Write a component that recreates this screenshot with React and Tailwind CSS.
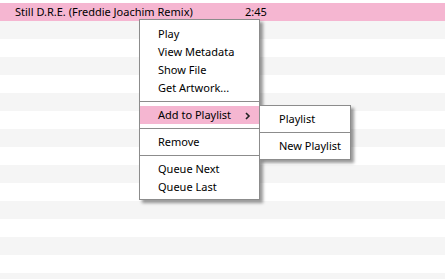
import React from "react";

const rows = 16;

function MenuItem({ children, active, arrow, pl = "pl-[18px]" }) {
  return (
    <div
      className={`h-[18px] flex items-center whitespace-nowrap ${pl} pr-2 relative ${active ? "bg-[#f5b6d1]" : ""}`}
    >
      <span className="pt-px">{children}</span>
      {arrow && (
        <svg className="absolute right-[8px] top-[6px]" width="6" height="8" viewBox="0 0 6 8">
          <path d="M1 1 L4 4 L1 7" stroke="#222" strokeWidth="1.6" fill="none" />
        </svg>
      )}
    </div>
  );
}

function Sep() {
  return (
    <div className="h-[9px] flex flex-col">
      <div className="h-[4px]" />
      <div className="h-px bg-[#8c8c8c]" />
    </div>
  );
}

export default function App() {
  const list = [];
  for (let i = 0; i < rows; i++) {
    const bg = i === 0 ? "bg-[#f5b6d1]" : i % 2 === 1 ? "bg-[#f5f5f5]" : "bg-white";
    list.push(
      <div key={i} className={`h-[18px] flex items-center whitespace-nowrap ${bg}`}>
        {i === 0 && (
          <>
            <span className="pl-[15px] w-[245px]">Still D.R.E. (Freddie Joachim Remix)</span>
            <span>2:45</span>
          </>
        )}
      </div>
    );
  }
  return (
    <div
      className="relative w-[445px] h-[279px] overflow-hidden bg-white text-[11px] text-black"
      style={{ fontFamily: '"Noto Sans", sans-serif' }}
    >
      <div className="h-[3px] bg-white" />
      {list}

      <div className="absolute left-[139px] top-[19px] w-[121px] border border-[#8c8c8c] bg-white pt-[5px] pb-[3px] shadow-[3px_3px_3px_rgba(0,0,0,0.4)]">
        <MenuItem>Play</MenuItem>
        <MenuItem>View Metadata</MenuItem>
        <MenuItem>Show File</MenuItem>
        <MenuItem>Get Artwork...</MenuItem>
        <Sep />
        <MenuItem active arrow>Add to Playlist</MenuItem>
        <Sep />
        <MenuItem>Remove</MenuItem>
        <Sep />
        <MenuItem>Queue Next</MenuItem>
        <MenuItem>Queue Last</MenuItem>
      </div>

      <div className="absolute left-[259px] top-[105px] w-[92px] border border-[#8c8c8c] bg-white pt-[4px] pb-[4px] shadow-[3px_3px_3px_rgba(0,0,0,0.4)]">
        <MenuItem pl="pl-[19px]">Playlist</MenuItem>
        <Sep />
        <MenuItem pl="pl-[19px]">New Playlist</MenuItem>
      </div>
    </div>
  );
}
